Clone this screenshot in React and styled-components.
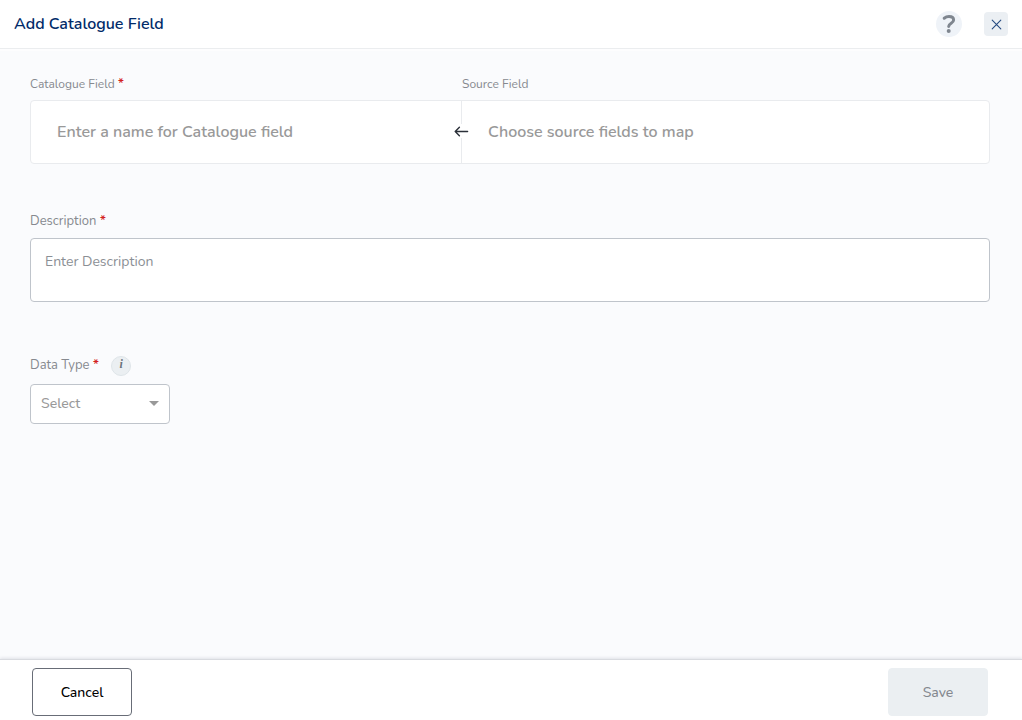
import React from "react";
import styled, { createGlobalStyle } from "styled-components";

const GlobalStyle = createGlobalStyle`
  *, *::before, *::after { box-sizing: border-box; }
  body { margin: 0; }
  body, button, input, textarea, select {
    font-family: Nunito, Roboto, "Open Sans", sans-serif;
  }
`;

const Page = styled.form`
  display: flex;
  flex-direction: column;
  min-height: 100vh;
  background: #fafbfd;
`;

const Header = styled.header`
  display: flex;
  align-items: center;
  justify-content: space-between;
  height: 49px;
  padding: 0 14px;
  background: #fff;
  border-bottom: 1px solid #ebedef;
  box-shadow: 0 2px 0 #fdfdfe;
`;

const Title = styled.h1`
  margin: 0;
  font-size: 16px;
  line-height: 24px;
  font-weight: 600;
  color: #022b69;
`;

const HeaderActions = styled.div`
  display: flex;
  align-items: center;
  gap: 22px;
`;

const HeaderButton = styled.button`
  display: flex;
  align-items: center;
  justify-content: center;
  width: ${(p) => p.$size}px;
  height: ${(p) => p.$size}px;
  padding: 0;
  border: 0;
  border-radius: ${(p) => (p.$round ? "50%" : "4px")};
  background: ${(p) => (p.$round ? "#eff3f8" : "#ebeff3")};
  cursor: pointer;
`;

const Body = styled.main`
  flex: 1;
  padding: 25px 32px 24px 30px;
`;

const Mapping = styled.div`
  display: grid;
  grid-template-columns: 45% 55%;
`;

const Label = styled.label`
  font-size: ${(p) => (p.$small ? 12 : 13)}px;
  line-height: ${(p) => (p.$small ? 20 : 18)}px;
  color: #86898f;
`;

const Required = styled.span`
  font-size: 14px;
  line-height: 16px;
  color: #d32020;
  font-weight: 600;
`;

const MappingBox = styled(Mapping)`
  height: 64px;
  margin-top: 6px;
  background: #fff;
  border: 1px solid #e9ebee;
  border-radius: 4px;
`;

const MappingCell = styled.div`
  position: relative;
  display: flex;
  border-right: ${(p) => (p.$divided ? "1px solid #e9ebee" : "0")};
`;

const MappingInput = styled.input`
  width: 100%;
  padding: 0 26px;
  border: 0;
  outline: 0;
  background: transparent;
  font-size: 16px;
  font-weight: 600;
  color: #33373d;
  &::placeholder { color: #999; opacity: 1; }
`;

const Arrow = styled.span`
  position: absolute;
  top: 23px;
  right: -9px;
  display: flex;
  padding: 1px;
  background: #fff;
`;

const Field = styled.div`
  display: flex;
  flex-direction: column;
  align-items: flex-start;
  gap: 8px;
  margin-top: ${(p) => p.$space}px;
`;

const LabelRow = styled.div`
  display: flex;
  align-items: flex-start;
  gap: 12px;
`;

const InfoButton = styled.button`
  display: flex;
  align-items: center;
  justify-content: center;
  width: 20px;
  height: 20px;
  padding: 0 0 4px;
  border: 1px solid #dfe5e9;
  border-radius: 50%;
  background: #ebeff2;
  font: italic 700 12px "Liberation Serif", serif;
  color: #6c737c;
`;

const TextArea = styled.textarea`
  display: block;
  width: 100%;
  height: 64px;
  padding: 13px 14px;
  border: 1px solid #bfc4cb;
  border-radius: 4px;
  background: #fff;
  resize: none;
  font-size: 14px;
  line-height: 20px;
  &::placeholder { color: #8b8f95; opacity: 1; }
`;

const SelectWrap = styled.div`
  position: relative;
  width: 140px;
`;

const Select = styled.select`
  appearance: none;
  display: block;
  width: 100%;
  height: 40px;
  padding: 0 28px 2px 10px;
  border: 1px solid #bfc4cb;
  border-radius: 4px;
  background: #fff;
  font-size: 14px;
  font-weight: 500;
  color: #999;
`;

const Caret = styled.svg`
  position: absolute;
  top: 17px;
  right: 11px;
  pointer-events: none;
`;

const Footer = styled.footer`
  display: flex;
  justify-content: space-between;
  padding: 8px 34px 4px 32px;
  border-top: 1px solid #d9dbe0;
  background: #fff;
  box-shadow: 0 -1px 3px rgba(30, 40, 70, 0.12);
`;

const Button = styled.button`
  width: 100px;
  height: 48px;
  padding: 0;
  border: 1px solid ${(p) => (p.disabled ? "#ebeff2" : "#686d77")};
  border-radius: 4px;
  background: ${(p) => (p.disabled ? "#ebeff2" : "#fff")};
  font-size: 14px;
  font-weight: 500;
  color: ${(p) => (p.disabled ? "#84888f" : "#000")};
`;

export default function App() {
  return (
    <Page onSubmit={(e) => e.preventDefault()}>
      <GlobalStyle />
      <Header>
        <Title>Add Catalogue Field</Title>
        <HeaderActions>
          <HeaderButton type="button" aria-label="Help" $size={26} $round>
            <svg width="14" height="20" viewBox="0 0 14 20" fill="none">
              <path d="M2.2 4.2C3.6 3.1 5.2 2.6 7 2.6c2.9 0 4.6 1.2 4.6 3.4 0 3.3-4.8 3-4.9 6.4" stroke="#7f868f" strokeWidth="3" strokeLinecap="round" />
              <circle cx="6.7" cy="16.9" r="2" fill="#7f868f" />
            </svg>
          </HeaderButton>
          <HeaderButton type="button" aria-label="Close" $size={24}>
            <svg width="12" height="12" viewBox="0 0 12 12">
              <path d="M2.2 2.2l8.6 8.6M10.8 2.2l-8.6 8.6" stroke="#254a80" strokeWidth="1.1" strokeLinecap="round" />
            </svg>
          </HeaderButton>
        </HeaderActions>
      </Header>

      <Body>
        <Mapping>
          <Label $small htmlFor="catalogue">Catalogue Field <Required>*</Required></Label>
          <Label $small htmlFor="source">Source Field</Label>
        </Mapping>
        <MappingBox>
          <MappingCell $divided>
            <MappingInput id="catalogue" placeholder="Enter a name for Catalogue field" />
            <Arrow>
              <svg width="15" height="12" viewBox="0 0 15 12" fill="none">
                <path d="M13.6 6.5H1.2M5.4 2.3L1.2 6.5l4.2 4.2" stroke="#2b3039" strokeWidth="1.4" strokeLinecap="round" strokeLinejoin="round" />
              </svg>
            </Arrow>
          </MappingCell>
          <MappingCell>
            <MappingInput id="source" placeholder="Choose source fields to map" />
          </MappingCell>
        </MappingBox>

        <Field $space={48}>
          <Label htmlFor="description">Description <Required>*</Required></Label>
          <TextArea id="description" placeholder="Enter Description" />
        </Field>

        <Field $space={54}>
          <LabelRow>
            <Label htmlFor="type">Data Type <Required>*</Required></Label>
            <InfoButton type="button" aria-label="About data types">i</InfoButton>
          </LabelRow>
          <SelectWrap>
            <Select id="type" defaultValue="">
              <option value="">Select</option>
            </Select>
            <Caret width="10" height="5" viewBox="0 0 10 5">
              <path d="M0 0h10L5 5z" fill="#999" />
            </Caret>
          </SelectWrap>
        </Field>
      </Body>

      <Footer>
        <Button type="button">Cancel</Button>
        <Button type="submit" disabled>Save</Button>
      </Footer>
    </Page>
  );
}
